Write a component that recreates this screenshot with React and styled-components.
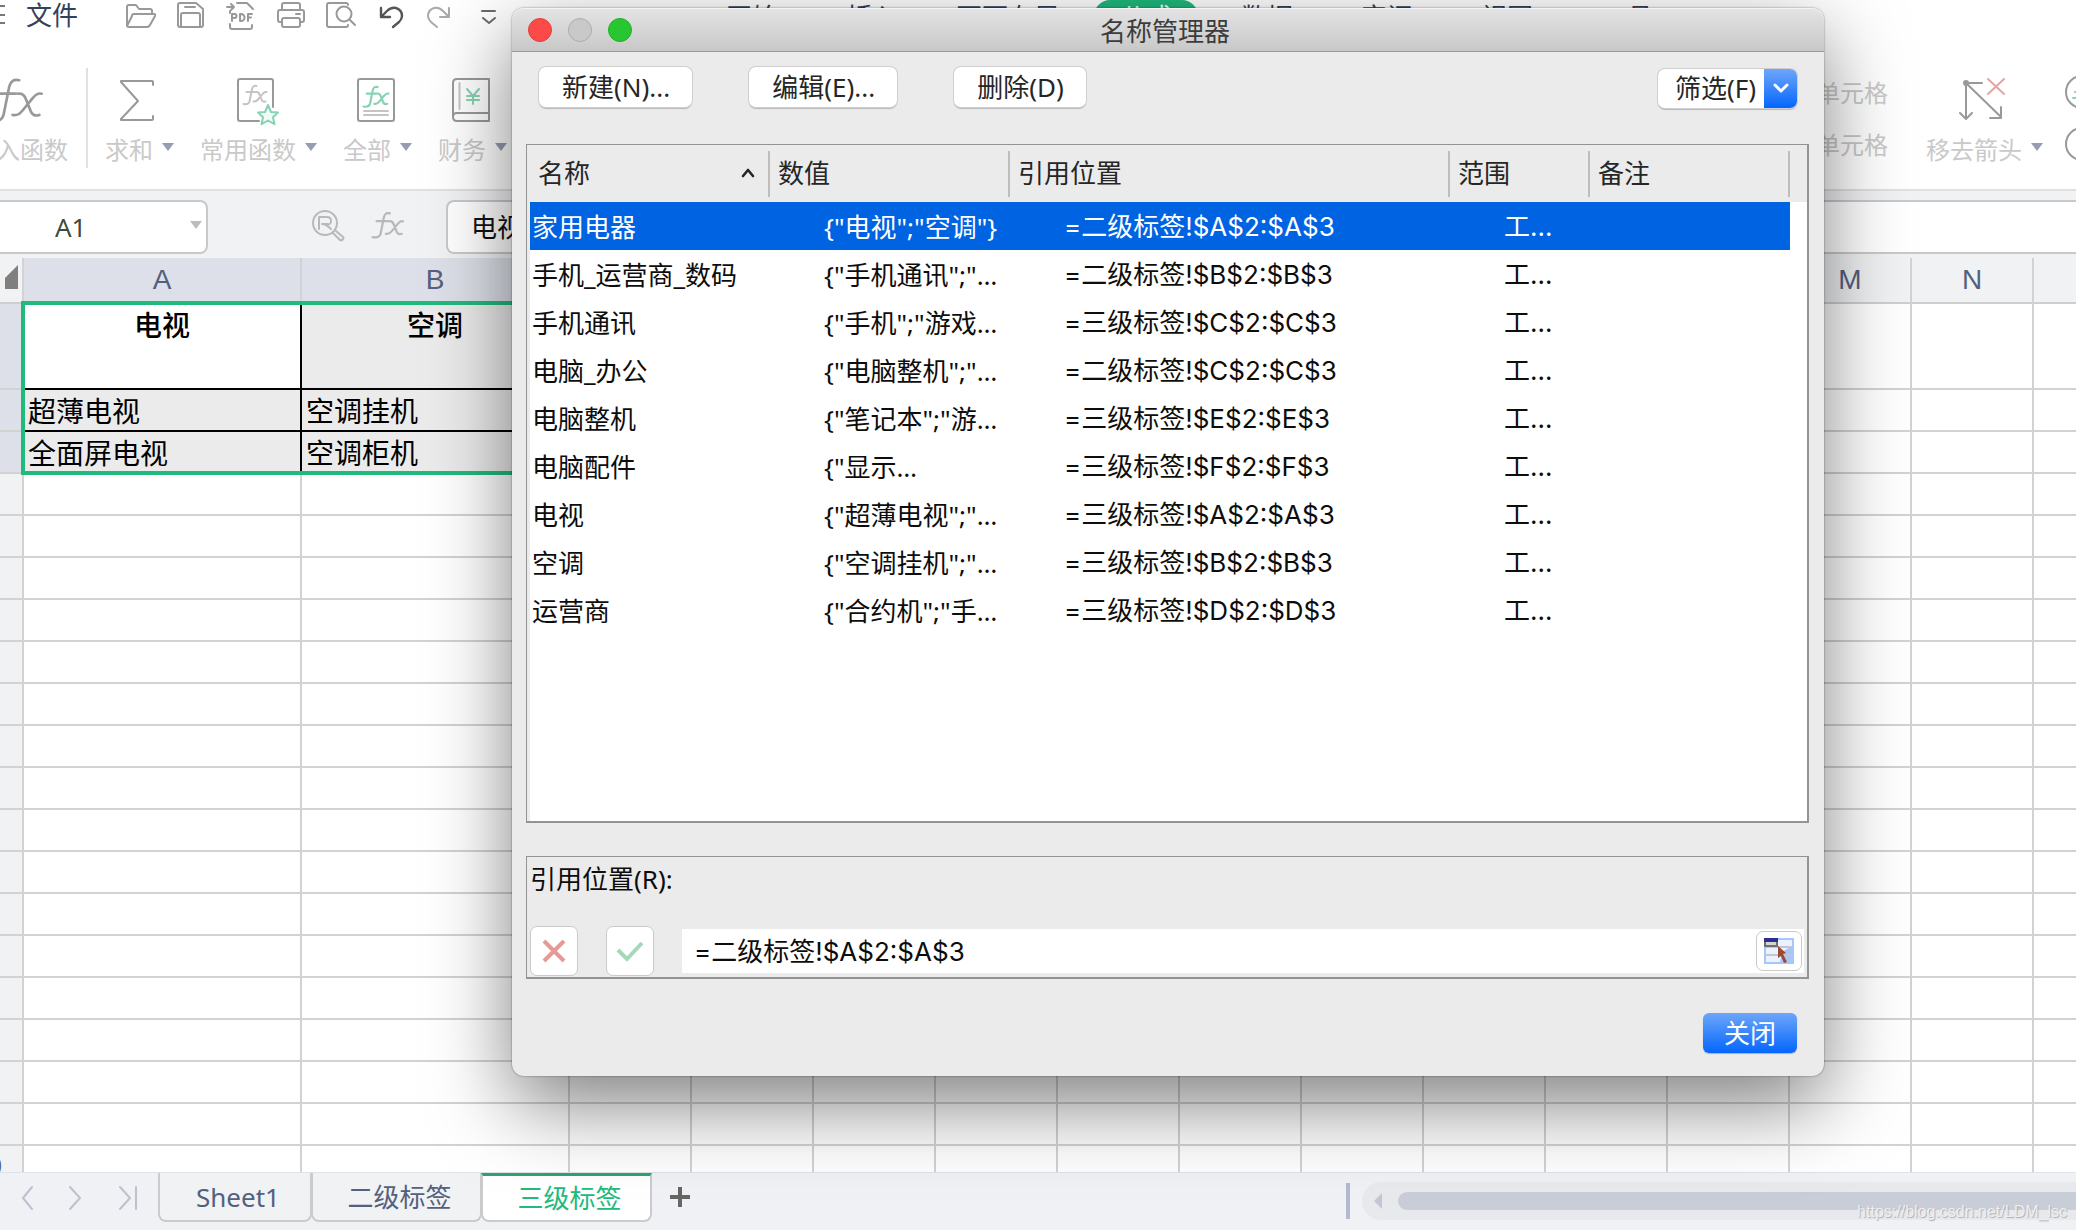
import React from "react";
import styled, { createGlobalStyle, css } from "styled-components";

const ui = `"Noto Sans", "Noto Sans CJK SC", sans-serif`;
const refFont = `Inter, "Noto Sans CJK SC", sans-serif`;
const cjk = `"Noto Sans CJK SC", sans-serif`;

const Global = createGlobalStyle`
  *, *::before, *::after { box-sizing: border-box; }
  html, body, #root { height: 100%; }
  body { margin: 0; overflow: hidden; background: #fff; font-family: ${ui}; font-size: 26px; }
  button, input { font: inherit; color: inherit; margin: 0; padding: 0; border: 0; background: none; }
  svg { flex: none; }
`;

const Screen = styled.div`
  position: relative;
  height: 100vh;
  display: flex;
  flex-direction: column;
  overflow: hidden;
`;

/* ---------- menu bar ---------- */

const MenuBar = styled.header`
  flex: none;
  display: flex;
  align-items: flex-start;
  height: 40px;
  white-space: nowrap;
`;

const FileButton = styled.button`
  display: flex;
  align-items: center;
  gap: 20px;
  width: 126px;
  height: 28px;
  font-family: ${cjk};
  line-height: 28px;
  color: #34415e;
`;

const QuickTools = styled.div`
  display: flex;
  gap: 20px;
  width: 600px;
`;

const IconButton = styled.button`
  display: flex;
  justify-content: center;
  width: 30px;
  height: 32px;
`;

const RibbonTabs = styled.nav`
  display: grid;
  grid-template-columns: 121px 109px 164px 121px repeat(4, 120px);
  align-items: start;
  font-family: ${cjk};
`;

const RibbonTab = styled.button`
  justify-self: start;
  height: 32px;
  line-height: 30px;
  color: #34415e;
  ${(p) =>
    p.$active &&
    css`
      margin-left: -26px;
      padding: 0 26px;
      border-radius: 16px;
      background: #1fb77c;
      color: #fff;
    `}
`;

/* ---------- ribbon ---------- */

const Ribbon = styled.section`
  flex: none;
  display: flex;
  height: 149px;
  padding-top: 28px;
  overflow: hidden;
  font-family: ${cjk};
  font-size: 24px;
  white-space: nowrap;
  color: #c9c9c9;
`;

const Command = styled.button`
  flex: none;
  display: flex;
  flex-direction: column;
  align-items: center;
  gap: 6px;
  height: 100px;
  padding-top: 10px;
  margin-right: ${(p) => p.$gap}px;
`;

const CommandLabel = styled.span`
  display: flex;
  align-items: center;
  gap: 9px;
  height: 34px;
  line-height: 34px;
`;

const IconSlot = styled.span`
  display: flex;
  justify-content: center;
  width: 100%;
  height: 48px;
  padding-right: ${(p) => p.$shift || 4}px;
`;

const InsertCommand = styled(Command)`
  width: 86px;
  align-items: flex-end;
  padding-right: 18px;
  margin-right: 0;
`;

const Divider = styled.span`
  flex: none;
  width: 2px;
  height: 100px;
  margin-right: 17px;
  background: #e1e1e1;
`;

const Caret = styled.span`
  width: 0;
  height: 0;
  margin-bottom: 4px;
  border: 6px solid transparent;
  border-top: 8px solid ${(p) => p.$color || "#969cb1"};
  border-bottom: 0;
`;

const RibbonEnd = styled.div`
  display: flex;
  margin-left: auto;
`;

const Stack = styled.div`
  display: flex;
  flex-direction: column;
  gap: 16px;
  padding-top: 6px;
  margin-right: ${(p) => p.$gap}px;
`;

const StackButton = styled.button`
  height: 36px;
  line-height: 36px;
`;

/* ---------- formula bar ---------- */

const FormulaBar = styled.section`
  flex: none;
  display: flex;
  height: 69px;
  padding-top: 9px;
  border-top: 2px solid #e0e0e1;
  background: #f1f2f4;
`;

const NameBox = styled.label`
  display: flex;
  align-items: center;
  width: 208px;
  height: 54px;
  padding-right: 4px;
  border: 2px solid #c9c9cb;
  border-left: 0;
  border-radius: 0 8px 8px 0;
  background: #fff;
  color: #3f4a38;
`;

const NameInput = styled.input`
  flex: 1;
  min-width: 0;
  padding-left: 55px;
  outline: 0;
`;

const FormulaTools = styled.div`
  display: flex;
  align-items: center;
  gap: 26px;
  width: 238px;
  height: 52px;
  padding-left: 103px;
`;

const FormulaInput = styled.input`
  flex: 1;
  min-width: 0;
  height: 54px;
  padding: 0 0 4px 23px;
  border: 2px solid #c9c9cb;
  border-right: 0;
  border-radius: 8px 0 0 8px;
  background: #fff;
  font-family: ${cjk};
  color: #111;
`;

/* ---------- grid ---------- */

const SheetArea = styled.main`
  position: relative;
  flex: 1;
  min-height: 0;
  overflow: hidden;
  background: #fff;
`;

const Sheet = styled.table`
  width: 2156px;
  table-layout: fixed;
  border-collapse: separate;
  border-spacing: 0;
  font-family: ${cjk};
  font-size: 28px;
  line-height: 36px;
`;

const ColHead = styled.th`
  height: 46px;
  padding: 0;
  border-right: 2px solid #d2d3d6;
  border-bottom: 2px solid #cfcfd1;
  background: ${(p) => (p.$on ? "#dde0e8" : "#f1f2f4")};
  font-family: "Liberation Sans", sans-serif;
  font-weight: 400;
  color: #53617f;
`;

const Corner = styled(ColHead)`
  background: #f1f2f4;
`;

const RowHead = styled.th`
  padding: 0;
  overflow: hidden;
  border-right: 2px solid #d2d2d2;
  border-bottom: 2px solid #d2d2d2;
  background: ${(p) => (p.$on ? "#dde0e8" : "#f1f2f4")};
`;

const RowNumber = styled.span`
  display: flex;
  justify-content: flex-end;
  width: 2px;
  overflow: hidden;
  font: 400 26px/36px "Liberation Sans", sans-serif;
  color: #53617f;
`;

const Row = styled.tr`
  height: ${(p) => p.$h}px;
`;

const Cell = styled.td`
  padding: 0 4px;
  border-right: 2px solid #d2d2d2;
  border-bottom: 2px solid #d2d2d2;
  color: #000;
  ${(p) =>
    p.$picked &&
    css`
      border-color: #000;
      background: #ebebeb;
    `}
  ${(p) =>
    p.$title &&
    css`
      padding-top: 2px;
      font-weight: 500;
      text-align: center;
      vertical-align: top;
    `}
  ${(p) => p.$active && "background: #fff;"}
`;

const Selection = styled.div`
  position: absolute;
  left: 21px;
  top: 43px;
  width: 1200px;
  height: 174px;
  border: 4px solid #21ba7d;
  pointer-events: none;
`;

/* ---------- sheet tabs ---------- */

const Footer = styled.footer`
  flex: none;
  display: flex;
  height: 58px;
  border-top: 1px solid #dfe2e8;
  background: #f0f1f4;
`;

const Pager = styled.div`
  display: flex;
  align-items: center;
  gap: 20px;
  width: 158px;
  height: 50px;
  padding-left: 13px;
`;

const SheetTab = styled.button`
  width: ${(p) => p.$w}px;
  height: 49px;
  padding-left: ${(p) => p.$pad}px;
  margin-right: -1px;
  border: 2px solid #cbcbcc;
  border-top: ${(p) => (p.$active ? "3px solid #2ba56f" : "0")};
  border-radius: 0 0 8px 8px;
  background: ${(p) => (p.$active ? "#fff" : "#f1f2f4")};
  color: ${(p) => (p.$active ? "#21ba7d" : "#53617f")};
  line-height: 44px;
`;

const AddTab = styled.button`
  display: flex;
  align-items: center;
  height: 48px;
  margin-left: 19px;
`;

const ScrollZone = styled.div`
  display: flex;
  align-items: center;
  flex: 0 1 730px;
  height: 38px;
  margin: 9px 0 0 auto;
`;

const Splitter = styled.span`
  width: 4px;
  height: 36px;
  margin-right: 12px;
  background: #b3bad0;
`;

const Track = styled.div`
  flex: 1;
  display: flex;
  align-items: center;
  gap: 16px;
  height: 38px;
  padding-left: 12px;
  border-radius: 19px 0 0 19px;
  background: #e7e9ed;
`;

const Thumb = styled.div`
  flex: 1;
  height: 18px;
  border-radius: 9px 0 0 9px;
  background: #c9cdd7;
`;

const Watermark = styled.span`
  position: absolute;
  right: 9px;
  bottom: 6px;
  font: 16px/24px "Liberation Sans", sans-serif;
  color: #eceef1;
  text-shadow: 1px 1px 1px #a9abb0;
`;

/* ---------- dialog ---------- */

const Dialog = styled.section`
  position: absolute;
  left: 512px;
  right: 252px;
  top: 8px;
  border-radius: 12px;
  background: #ebebeb;
  color: #262626;
  box-shadow: 0 0 2px rgba(0, 0, 0, 0.5), 0 28px 80px rgba(0, 0, 0, 0.5);
`;

const TitleBar = styled.div`
  display: grid;
  grid-template-columns: 1fr auto 1fr;
  align-items: center;
  height: 44px;
  padding: 0 8px 0 16px;
  border-bottom: 1px solid #9a9a9a;
  border-radius: 12px 12px 0 0;
  background: linear-gradient(#e4e4e4, #c8c8c8);
  box-shadow: inset 0 1px 0 #f4f4f4;
  color: #3c3c3c;
`;

const Title = styled.h1`
  margin: 0;
  margin-left: -14px;
  font: 400 26px/40px ${cjk};
`;

const Lights = styled.div`
  display: flex;
  gap: 16px;
`;

const Light = styled.button`
  width: 24px;
  height: 24px;
  border-radius: 50%;
  border: 1px solid ${(p) => p.$edge};
  background: ${(p) => p.$fill};
`;

const Actions = styled.div`
  display: flex;
  gap: 57px;
  height: 92px;
  padding: 15px 27px 0;
`;

const PushButton = styled.button`
  height: 40px;
  padding: 0 22px 0 23px;
  border-radius: 7px;
  background: #fff;
  box-shadow: 0 0 0 1px #cfcfcf, 0 2px 1px rgba(0, 0, 0, 0.22);
  line-height: 38px;
`;

const FilterButton = styled(PushButton)`
  display: flex;
  height: 39px;
  padding: 0 0 0 17px;
  margin: 2px 0 0 auto;
`;

const FilterArrow = styled.span`
  display: flex;
  align-items: center;
  justify-content: center;
  width: 33px;
  height: 39px;
  margin-left: 8px;
  border-radius: 0 7px 7px 0;
  background: linear-gradient(#6ea6fa, #0466fd);
`;

const List = styled.div`
  min-height: 679px;
  margin: 0 15px 33px 14px;
  border: 1px solid #939393;
  border-width: 1px 2px 2px 1px;
  background: linear-gradient(90deg, #ebebeb 3px, transparent 3px),
    linear-gradient(#ebebeb 57px, #fff 57px);
  padding: 0 17px 0 3px;
`;

const Names = styled.table`
  width: 100%;
  table-layout: fixed;
  border-collapse: separate;
  border-spacing: 0;
  white-space: nowrap;
  color: #0d0d0d;
`;

const NameHead = styled.th`
  height: 57px;
  padding: 6px 0 5px;
  font: 400 26px/42px ${cjk};
  text-align: left;
  color: #262626;
`;

const HeadInner = styled.div`
  display: flex;
  align-items: center;
  justify-content: space-between;
  height: 46px;
  padding: 0 12px 4px 8px;
  border-right: 2px solid #bdbdbd;
`;

const NameRow = styled.tr`
  height: 48px;
  ${(p) =>
    p.$selected &&
    css`
      background: #0063e1;
      color: #fff;
    `}
`;

const NameCell = styled.td`
  padding: 2px 0 0 ${(p) => (p.$first ? 2 : 54)}px;
  font-family: ${(p) => (p.$ref ? refFont : ui)};
  line-height: 40px;
`;

const RefBox = styled.div`
  display: flex;
  flex-direction: column;
  justify-content: space-between;
  min-height: 123px;
  margin: 0 15px 34px 14px;
  padding: 4px 3px 1px;
  border: 1px solid #939393;
  border-width: 1px 2px 2px 1px;
  color: #0d0d0d;
`;

const RefLabel = styled.label`
  line-height: 36px;
`;

const RefRow = styled.div`
  display: flex;
  align-items: center;
`;

const SquareButton = styled.button`
  display: flex;
  align-items: center;
  justify-content: center;
  width: 48px;
  height: 50px;
  margin-right: 28px;
  border: 1px solid #cacaca;
  border-radius: 7px;
  background: #fff;
`;

const RefField = styled.div`
  flex: 1;
  display: flex;
  align-items: center;
  height: 44px;
  padding-right: 2px;
  background: #fff;
`;

const RefInput = styled.input`
  flex: 1;
  height: 44px;
  padding: 0 0 4px 12px;
  font-family: ${refFont};
`;

const PickButton = styled(SquareButton)`
  width: 46px;
  height: 40px;
  margin-right: 0;
`;

const DialogFoot = styled.div`
  display: flex;
  justify-content: flex-end;
  padding: 0 27px 23px;
`;

const CloseButton = styled.button`
  width: 94px;
  height: 40px;
  border-radius: 6px;
  padding-bottom: 2px;
  background: linear-gradient(#6ea6fa, #0466fd);
  box-shadow: 0 1px 1px rgba(0, 0, 0, 0.25);
  font-family: ${cjk};
  line-height: 36px;
  color: #fff;
`;

/* ---------- icons ---------- */

const Icon = ({ w = 30, h = 32, color = "#999", sw = 2, children }) => (
  <svg width={w} height={h} viewBox={`0 0 ${w} ${h}`} fill="none" stroke={color} strokeWidth={sw} strokeLinecap="round" strokeLinejoin="round" aria-hidden="true">
    {children}
  </svg>
);

const quickIcons = [
  ["打开", <Icon key="i"><path d="M1 25V7q0-2 2-2h7l3 4h11q2 0 2 2v3M1 25q0 2 2 2h18q2 0 3-2l5-9q1-2-1-2H8q-2 0-2 2L1 26" /></Icon>],
  ["保存", <Icon key="i"><path d="M4 3h16l7 6v16q0 2-2 2H4q-2 0-2-2V5q0-2 2-2zM5 27V15q0-2 2-2h15q2 0 2 2v12M9 7h10" /></Icon>],
  ["PDF", (
    <Icon key="i">
      <path d="M11 3h10l6 6M4 13v-2M4 24v3q0 2 2 2h18q2 0 2-2v-2M1 7h7M5 4l3 3-3 3" />
      <path d="M6 21v-7h2.500a2 2 0 0 1 0 4H6M14 14h1a3.500 3.500 0 0 1 0 7h-1zM22 21v-7h4M22 17.500h3" />
    </Icon>
  )],
  ["打印", <Icon key="i"><path d="M6 10V5q0-2 2-2h14q2 0 2 2v5M6 22H4q-2 0-2-2v-8q0-2 2-2h22q2 0 2 2v8q0 2-2 2h-2M20 14h4M8 18h14q2 0 2 2v5q0 2-2 2H8q-2 0-2-2v-5q0-2 2-2z" /></Icon>],
  ["预览", <Icon key="i"><path d="M22 5q0-2-2-2H3Q1 3 1 5v20q0 2 2 2h17q2 0 2-2M24 20l5 5" /><circle cx="18" cy="14" r="7.500" /></Icon>],
  ["撤销", <Icon key="i" color="#555" sw={2.4}><path d="M5 8v9h9M5 17l6-6q4-4 9-3 6 2 6 8 0 3-3 6l-6 5" /></Icon>],
  ["恢复", <Icon key="i" color="#aaa"><path d="M23 8v9h-9M23 17l-6-6q-4-4-9-3-6 2-6 8 0 3 3 6l6 5" /></Icon>],
  ["更多", <Icon key="i" color="#6b6b6b"><path d="M6 11h13M7 18l6 5 6-5" /></Icon>],
];

const FxGlyph = ({ color, sw, x = 0, y = 0, s = 1 }) => (
  <g transform={`translate(${x} ${y}) scale(${s})`} stroke={color} strokeWidth={sw} fill="none">
    <path d="M27 2q-7-2-9 6l-5 25q-2 7-12 5M7 14h17" />
    <path d="M26 14q5-1 7 5l4 10q2 6 8 4M47 14q-4-1-8 4l-9 11q-4 5-9 4" />
  </g>
);

const FxIcon = () => <Icon w={54} h={48}><FxGlyph color="#999" sw={2.4} s={1.12} /></Icon>;

const SumIcon = () => <Icon w={38} h={46}><path d="M34 7V4q0-1-1-1H2v1l17 19L2 41v1h31q1 0 1-1v-3" /></Icon>;

const CommonIcon = () => (
  <Icon w={44} h={48}>
    <path d="M24 43H5q-2 0-2-2V3q0-2 2-2h31q2 0 2 2v26" />
    <FxGlyph color="#c4c4c4" sw={4} x={8} y={7} s={0.5} />
    <path d="M33 27l3 7 7 .6-5 4.600 1.500 7L33 42.500 26.500 46.200 28 39.200l-5-4.600 7-.6z" stroke="#86d3b4" fill="#f2faf7" />
  </Icon>
);

const AllIcon = () => (
  <Icon w={38} h={48}>
    <rect x="1" y="1" width="36" height="42" rx="2" />
    <FxGlyph color="#86d3b4" sw={4} x={6} y={8} s={0.54} />
    <path d="M7 33h24M7 37h24" stroke="#c4c4c4" />
  </Icon>
);

const MoneyIcon = () => (
  <Icon w={38} h={48}>
    <path d="M37 1H5Q1 1 1 5v34q0 4 4 4h32zM1 39q0-4 4-4h32" />
    <path d="M7.500 5v26" stroke="#c4c4c4" />
    <path d="M15 11l6 7 6-7M15 18h12M15 22h12M21 18v8" stroke="#86d3b4" />
  </Icon>
);

const ArrowsIcon = () => (
  <Icon w={48} h={48}>
    <circle cx="7" cy="5" r="2" fill="#999" />
    <path d="M23 5H7v36M1 35l6 6 6-6M7 5l35 34M42 29v11H31" />
    <path d="M29 1l16 15M45 1L29 16" stroke="#e6a3a3" />
  </Icon>
);

const CircleIcon = ({ mark }) => (
  <Icon w={34} h={36}>
    <circle cx="17" cy="18" r="16" />
    {mark && <path d="M8 24h6M10 18h4" stroke="#86d3b4" />}
  </Icon>
);

const SearchR = () => (
  <Icon w={34} h={34} color="#b9b9bb">
    <circle cx="14" cy="14" r="12" />
    <path d="M8 20V8h8q4 0 4 4t-4 3h-5q4 0 9 5M22 24l7 7q2 1 3-1t0-2l-7-6" />
  </Icon>
);

/* ---------- data ---------- */

const names = [
  ["家用电器", '{"电视";"空调"}', "=二级标签!$A$2:$A$3"],
  ["手机_运营商_数码", '{"手机通讯";"…', "=二级标签!$B$2:$B$3"],
  ["手机通讯", '{"手机";"游戏…', "=三级标签!$C$2:$C$3"],
  ["电脑_办公", '{"电脑整机";"…', "=二级标签!$C$2:$C$3"],
  ["电脑整机", '{"笔记本";"游…', "=三级标签!$E$2:$E$3"],
  ["电脑配件", '{"显示…', "=三级标签!$F$2:$F$3"],
  ["电视", '{"超薄电视";"…', "=三级标签!$A$2:$A$3"],
  ["空调", '{"空调挂机";"…', "=三级标签!$B$2:$B$3"],
  ["运营商", '{"合约机";"手…', "=三级标签!$D$2:$D$3"],
];

const columns = "ABCDEFGHIJKLMNOP".split("");
const cells = [
  ["电视", "空调"],
  ["超薄电视", "空调挂机"],
  ["全面屏电视", "空调柜机"],
];
const rowHeights = [86, 42, 42];
const rows = Array.from({ length: 20 }, (_, i) => i);
const ribbonTabs = ["开始", "插入", "页面布局", "公式", "数据", "审阅", "视图", "工具"];
const headings = ["名称", "数值", "引用位置", "范围", "备注"];

const NameManager = () => (
  <Dialog role="dialog" aria-labelledby="dlg-title">
    <TitleBar>
      <Lights>
        <Light aria-label="关闭窗口" $fill="#fc4a48" $edge="#e0403f" />
        <Light aria-label="最小化" $fill="#c9c9c9" $edge="#adadad" />
        <Light aria-label="缩放" $fill="#28c732" $edge="#1fb02a" />
      </Lights>
      <Title id="dlg-title">名称管理器</Title>
    </TitleBar>
    <Actions>
      <PushButton>新建(N)...</PushButton>
      <PushButton>编辑(E)...</PushButton>
      <PushButton>删除(D)</PushButton>
      <FilterButton>
        筛选(F)
        <FilterArrow>
          <Icon w={18} h={12} color="#fff" sw={3}><path d="M3 2l6 6 6-6" /></Icon>
        </FilterArrow>
      </FilterButton>
    </Actions>
    <List>
      <Names>
        <colgroup>
          <col width="240" />
          <col width="240" />
          <col width="440" />
          <col width="140" />
          <col />
        </colgroup>
        <thead>
          <tr>
            {headings.map((h, i) => (
              <NameHead key={h} scope="col">
                <HeadInner>
                  {h}
                  {i === 0 && <Icon w={16} h={12} color="#262626" sw={2.600}><path d="M3 10l5-6 5 6" /></Icon>}
                </HeadInner>
              </NameHead>
            ))}
          </tr>
        </thead>
        <tbody>
          {names.map(([name, value, ref], i) => (
            <NameRow key={name} $selected={i === 0}>
              <NameCell $first>{name}</NameCell>
              <NameCell>{value}</NameCell>
              <NameCell $ref>{ref}</NameCell>
              <NameCell $ref>工…</NameCell>
              <NameCell />
            </NameRow>
          ))}
        </tbody>
      </Names>
    </List>
    <RefBox>
      <RefLabel htmlFor="ref">引用位置(R):</RefLabel>
      <RefRow>
        <SquareButton aria-label="取消">
          <Icon w={26} h={26} color="#e69a98" sw={4}><path d="M3 3l20 20M23 3L3 23" strokeLinecap="butt" /></Icon>
        </SquareButton>
        <SquareButton aria-label="确认">
          <Icon w={30} h={26} color="#a5d8b8" sw={4}><path d="M3 12l9 9L27 5" strokeLinecap="butt" strokeLinejoin="miter" /></Icon>
        </SquareButton>
        <RefField>
          <RefInput id="ref" defaultValue="=二级标签!$A$2:$A$3" />
          <PickButton aria-label="选择区域">
            <svg width="30" height="26" viewBox="0 0 30 26" aria-hidden="true">
              <rect x="1" y="1" width="28" height="24" fill="#e9f2fe" stroke="#a6c8f8" strokeWidth="2" />
              <path d="M18 14l10-6v16H16z" fill="#a9c6fb" />
              <path d="M2 9h26M2 17h26" stroke="#c3c6ca" strokeWidth="2" />
              <rect x="0" y="0" width="14" height="4" fill="#2d2f90" />
              <path d="M1 4v4h12V4" fill="#d4d4d4" stroke="#6f6f6f" strokeWidth="2" />
              <path d="M14 8l8 7-3 1 4 8-3 1-3-7-3 2z" fill="#9a4b32" />
            </svg>
          </PickButton>
        </RefField>
      </RefRow>
    </RefBox>
    <DialogFoot>
      <CloseButton>关闭</CloseButton>
    </DialogFoot>
  </Dialog>
);

export default function App() {
  return (
    <Screen lang="zh-CN">
      <Global />
      <MenuBar>
        <FileButton>
          <Icon w={6} h={28} color="#777"><path d="M0 6h5M0 15h5M0 23h5" strokeLinecap="butt" /></Icon>
          文件
        </FileButton>
        <QuickTools>
          {quickIcons.map(([label, icon]) => (
            <IconButton key={label} aria-label={label}>{icon}</IconButton>
          ))}
        </QuickTools>
        <RibbonTabs>
          {ribbonTabs.map((t) => (
            <RibbonTab key={t} $active={t === "公式"}>{t}</RibbonTab>
          ))}
        </RibbonTabs>
      </MenuBar>

      <Ribbon>
        <InsertCommand>
          <IconSlot $shift={36}><FxIcon /></IconSlot>
          <CommandLabel>入函数</CommandLabel>
        </InsertCommand>
        <Divider />
        <Command $gap={26}>
          <IconSlot><SumIcon /></IconSlot>
          <CommandLabel>求和<Caret /></CommandLabel>
        </Command>
        <Command $gap={26}>
          <IconSlot><CommonIcon /></IconSlot>
          <CommandLabel>常用函数<Caret /></CommandLabel>
        </Command>
        <Command $gap={26}>
          <IconSlot><AllIcon /></IconSlot>
          <CommandLabel>全部<Caret /></CommandLabel>
        </Command>
        <Command $gap={26}>
          <IconSlot><MoneyIcon /></IconSlot>
          <CommandLabel>财务<Caret /></CommandLabel>
        </Command>
        <RibbonEnd>
          <Stack $gap={38}>
            <StackButton>单元格</StackButton>
            <StackButton>单元格</StackButton>
          </Stack>
          <Command $gap={22}>
            <IconSlot><ArrowsIcon /></IconSlot>
            <CommandLabel>移去箭头<Caret /></CommandLabel>
          </Command>
          <Stack $gap={-23}>
            <StackButton aria-label="错误检查"><CircleIcon mark /></StackButton>
            <StackButton aria-label="公式求值"><CircleIcon /></StackButton>
          </Stack>
        </RibbonEnd>
      </Ribbon>

      <FormulaBar>
        <NameBox>
          <NameInput aria-label="名称框" defaultValue="A1" />
          <Caret $color="#bdbdbd" />
        </NameBox>
        <FormulaTools>
          <SearchR />
          <Icon w={34} h={28}><FxGlyph color="#b9b9bb" sw={3.400} x={1} s={0.66} /></Icon>
        </FormulaTools>
        <FormulaInput aria-label="编辑栏" defaultValue="电视" />
      </FormulaBar>

      <SheetArea>
        <Sheet>
          <colgroup>
            <col width="24" />
            {columns.map((c, i) => (
              <col key={c} width={i === 0 ? 278 : i === 1 ? 268 : 122} />
            ))}
          </colgroup>
          <thead>
            <tr>
              <Corner>
                <Icon w={13} h={24}><path d="M13 0v24H0V13z" fill="#7f7f7f" stroke="none" /></Icon>
              </Corner>
              {columns.map((c, i) => (
                <ColHead key={c} scope="col" $on={i < 6}>{c}</ColHead>
              ))}
            </tr>
          </thead>
          <tbody>
            {rows.map((r) => (
              <Row key={r} $h={rowHeights[r] || 42}>
                <RowHead $on={r < 3}>{r === 19 && <RowNumber>{r + 1}</RowNumber>}</RowHead>
                {columns.map((c, i) => (
                  <Cell key={c} $picked={r < 3 && i < 6} $title={r === 0} $active={r === 0 && i === 0}>
                    {cells[r] && cells[r][i]}
                  </Cell>
                ))}
              </Row>
            ))}
          </tbody>
        </Sheet>
        <Selection />
      </SheetArea>

      <Footer>
        <Pager>
          <IconButton aria-label="上一张"><Icon color="#bcc1d0"><path d="M19 5L10 16l9 11" /></Icon></IconButton>
          <IconButton aria-label="下一张"><Icon color="#bcc1d0"><path d="M7 5l10 11L7 27" /></Icon></IconButton>
          <IconButton aria-label="最后一张"><Icon color="#bcc1d0"><path d="M7 5l10 11L7 27M23 5v22" /></Icon></IconButton>
        </Pager>
        <SheetTab $w={154} $pad={6}>Sheet1</SheetTab>
        <SheetTab $w={171} $pad={6}>二级标签</SheetTab>
        <SheetTab $w={171} $pad={6} $active>三级标签</SheetTab>
        <AddTab aria-label="新建工作表">
          <Icon w={20} h={24} color="#666" sw={4}><path d="M0 12h20M10 2v20" strokeLinecap="butt" /></Icon>
        </AddTab>
        <ScrollZone>
          <Splitter />
          <Track>
            <Icon w={8} h={16}><path d="M8 0v16L0 8z" fill="#c3c7d1" stroke="none" /></Icon>
            <Thumb />
          </Track>
        </ScrollZone>
      </Footer>

      <NameManager />
      <Watermark>https://blog.csdn.net/LDM_lsc</Watermark>
    </Screen>
  );
}
